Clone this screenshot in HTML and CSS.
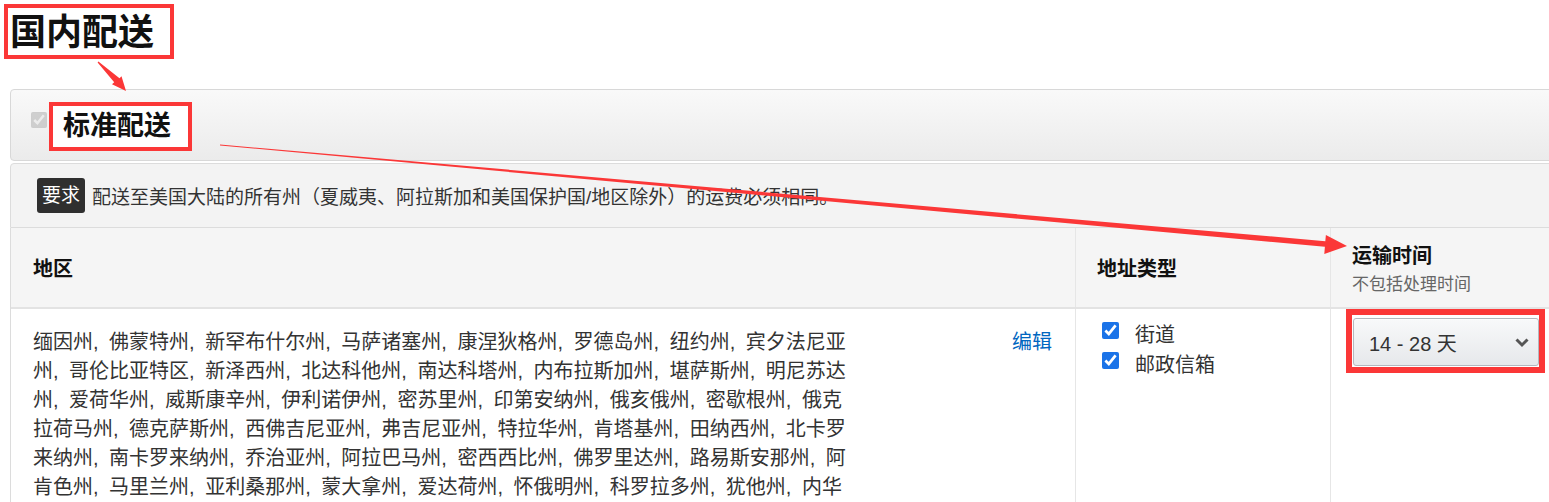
FILE: index.html
```html
<!DOCTYPE html>
<html lang="zh-CN">
<head>
  <meta charset="UTF-8">
  <title>国内配送</title>
  <link rel="stylesheet" href="styles.css">
</head>
<body>

  <!-- Page title -->
  <h1 class="page-title">国内配送</h1>

  <div class="panel">

    <!-- Shipping method header -->
    <div class="panel-head">
      <input type="checkbox" checked disabled>
      <span class="method-name">标准配送</span>
    </div>

    <!-- Requirement note -->
    <div class="panel-note">
      <span class="badge">要求</span>
      <span>配送至美国大陆的所有州（夏威夷、阿拉斯加和美国保护国/地区除外）的运费必须相同。</span>
    </div>

    <!-- Rates table -->
    <div class="rate-table">
      <div class="rate-row rate-head">
        <div class="cell">地区</div>
        <div class="cell">地址类型</div>
        <div class="cell">
          <div class="head-title">运输时间</div>
          <div class="head-sub">不包括处理时间</div>
        </div>
      </div>

      <div class="rate-row">
        <div class="cell region">
          <p class="states">缅因州, 佛蒙特州, 新罕布什尔州, 马萨诸塞州, 康涅狄格州, 罗德岛州, 纽约州, 宾夕法尼亚州, 哥伦比亚特区, 新泽西州, 北达科他州, 南达科塔州, 内布拉斯加州, 堪萨斯州, 明尼苏达州, 爱荷华州, 威斯康辛州, 伊利诺伊州, 密苏里州, 印第安纳州, 俄亥俄州, 密歇根州, 俄克拉荷马州, 德克萨斯州, 西佛吉尼亚州, 弗吉尼亚州, 特拉华州, 肯塔基州, 田纳西州, 北卡罗来纳州, 南卡罗来纳州, 乔治亚州, 阿拉巴马州, 密西西比州, 佛罗里达州, 路易斯安那州, 阿肯色州, 马里兰州, 亚利桑那州, 蒙大拿州, 爱达荷州, 怀俄明州, 科罗拉多州, 犹他州, 内华达州, 新墨西哥州, 加利福尼亚州, 俄勒冈州, 华盛顿州</p>
          <a href="#" class="edit">编辑</a>
        </div>
        <div class="cell types">
          <label><input type="checkbox" checked> 街道</label>
          <label><input type="checkbox" checked> 邮政信箱</label>
        </div>
        <div class="cell transit">
          <div class="select-mark">
            <div class="select">
              <span>14 - 28 天</span>
              <svg width="16" height="11" viewBox="0 0 16 11"><path d="M2.5 2.5 L8 8 L13.5 2.5" fill="none" stroke="#555" stroke-width="3"/></svg>
            </div>
          </div>
        </div>
      </div>
    </div>
  </div>

  <!-- Red annotation arrows -->
  <svg class="annotations" width="1549" height="502" viewBox="0 0 1549 502">
    <polygon points="97.6,62.4 98.4,61.6 119.5,78.2 121.5,76.3 126,91 112,84.2 114.2,82.3" fill="#fb3737"/>
    <polygon points="220,144.5 220,145.5 1324.9,246.8 1324.3,254 1347,246 1325.9,235 1325.3,241.2" fill="#fb3737"/>
  </svg>

</body>
</html>
```

FILE: styles.css
```css
* {
  box-sizing: border-box;
  margin: 0;
  padding: 0;
}

body {
  position: relative;
  width: 1549px;
  height: 502px;
  overflow: hidden;
  background: #fff;
  color: #333;
  font-family: "Liberation Sans", "Noto Sans CJK SC", sans-serif;
}

/* Title with red frame */
.page-title {
  width: fit-content;
  margin: 4px 0 0 4px;
  padding: 3px 16px 0 2px;
  height: 55px;
  border: 4px solid #fb3737;
  background: #fff;
  color: #111;
  font-size: 36px;
  line-height: 44px;
  font-weight: 700;
}

.panel {
  width: 1560px;
  margin: 30px 0 0 10px;
}

.panel-head {
  display: flex;
  align-items: flex-start;
  height: 72px;
  padding-left: 20px;
  border: 1px solid #d8d8d8;
  border-radius: 4px;
  background: linear-gradient(#f9f9f9, #ebebeb);
}

.panel-head input {
  width: 16px;
  height: 16px;
  margin: 22px 2px 0 0;
}

.method-name {
  margin-top: 12px;
  padding: 0 17px 0 10px;
  border: 4px solid #fb3737;
  background: #fff;
  color: #111;
  font-size: 27px;
  font-weight: 700;
  line-height: 41px;
}

.panel-note {
  display: flex;
  align-items: center;
  gap: 7px;
  height: 65px;
  margin-top: 2px;
  padding: 0 26px;
  border: 1px solid #dcdcdc;
  border-radius: 4px 4px 0 0;
  background: #f3f3f3;
  font-size: 19px;
}

.badge {
  padding: 0 5px;
  border-radius: 3px;
  background: #2f2f2f;
  color: #fff;
  line-height: 35px;
}

/* Table */
.rate-table {
  border-left: 1px solid #dcdcdc;
}

.rate-row {
  display: grid;
  grid-template-columns: 1064px 255px 1fr;
}

.rate-row .cell + .cell {
  border-left: 1px solid #e6e6e6;
}

.rate-head {
  height: 81px;
  border-bottom: 2px solid #e3e3e3;
  background: #f5f5f5;
}

.rate-head .cell {
  display: flex;
  flex-direction: column;
  justify-content: center;
  padding-left: 22px;
  color: #111;
  font-size: 20px;
  font-weight: 700;
}

.rate-head .cell + .cell {
  padding-left: 21px;
}

.head-title {
  line-height: 28px;
  margin-top: 6px;
}

.head-sub {
  color: #666;
  font-size: 17px;
  font-weight: 400;
  line-height: 30px;
}

.region {
  display: flex;
  justify-content: space-between;
  min-height: 200px;
  padding: 19px 23px 0 22px;
}

.states {
  width: 822px;
  font-size: 20px;
  line-height: 29px;
  word-spacing: 5px;
}

.edit {
  color: #0066c0;
  font-size: 20px;
  line-height: 29px;
  text-decoration: none;
}

.types {
  padding: 11px 0 0 26px;
}

.types label {
  display: flex;
  align-items: flex-start;
  gap: 16px;
  font-size: 20px;
  line-height: 30px;
}

.types input {
  width: 17px;
  height: 17px;
  margin: 2px 0 0;
  accent-color: #1a73e8;
}

.transit {
  padding-left: 15px;
}

.select-mark {
  width: 199px;
  padding: 3px 0 1px 1px;
  border: 6px solid #fb3737;
  background: #fff;
}

.select {
  display: flex;
  align-items: center;
  justify-content: space-between;
  height: 48px;
  padding: 0 8px 0 15px;
  border: 1px solid #b4b8bf;
  border-radius: 3px;
  background: linear-gradient(#f8f9fa, #e6e8eb);
  box-shadow: 0 1px 0 rgba(255, 255, 255, 0.6) inset;
  color: #333;
  font-size: 20px;
}

/* Annotation overlay */
.annotations {
  position: absolute;
  top: 0;
  left: 0;
  pointer-events: none;
}
```
